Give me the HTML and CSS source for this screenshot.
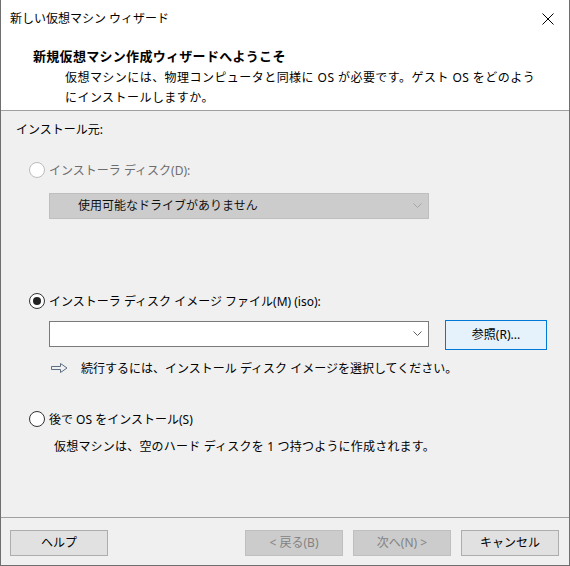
FILE: index.html
```html
<!DOCTYPE html>
<html lang="ja">
<head>
<meta charset="utf-8">
<title>新しい仮想マシン ウィザード</title>
<link rel="stylesheet" href="styles.css">
</head>
<body>
<div class="window">
  <div class="titlebar">
    <span class="title">新しい仮想マシン ウィザード</span>
    <svg class="close" width="12" height="12" viewBox="0 0 12 12"><path d="M0.5 0.5 L11.5 11.5 M11.5 0.5 L0.5 11.5" stroke="#000" stroke-width="1" fill="none"/></svg>
  </div>
  <div class="header">
    <div class="header-title">新規仮想マシン作成ウィザードへようこそ</div>
    <div class="header-desc">仮想マシンには、物理コンピュータと同様に OS が必要です。ゲスト OS をどのよう<br>にインストールしますか。</div>
  </div>
  <div class="content">
    <div class="label">インストール元:</div>

    <div class="radio-row disabled first">
      <span class="radio"></span>
      <span>インストーラ ディスク(D):</span>
    </div>
    <div class="combo combo-disabled">
      <span class="combo-text">使用可能なドライブがありません</span>
      <svg class="chev" width="9" height="6" viewBox="0 0 9 6"><path d="M0.5 0.5 L4.5 4.5 L8.5 0.5" stroke="#a6a6a6" fill="none"/></svg>
    </div>

    <div class="radio-row second">
      <span class="radio checked"></span>
      <span>インストーラ ディスク イメージ ファイル(M) (iso):</span>
    </div>
    <div class="iso-row">
      <div class="combo combo-edit">
        <svg class="chev" width="9" height="6" viewBox="0 0 9 6"><path d="M0.5 0.5 L4.5 4.5 L8.5 0.5" stroke="#606060" fill="none"/></svg>
      </div>
      <div class="btn btn-focus">参照(R)...</div>
    </div>
    <div class="hint-row">
      <svg class="arrow" width="17" height="10" viewBox="0 0 17 10"><path d="M0.5 3.5 H9.5 V0.5 L16 5 L9.5 9.5 V6.5 H0.5 Z" fill="none" stroke="#5d6d82" stroke-width="1"/></svg>
      <span>続行するには、インストール ディスク イメージを選択してください。</span>
    </div>

    <div class="radio-row third">
      <span class="radio"></span>
      <span>後で OS をインストール(S)</span>
    </div>
    <div class="note">仮想マシンは、空のハード ディスクを 1 つ持つように作成されます。</div>
  </div>
  <div class="footer">
    <div class="btn">ヘルプ</div>
    <div class="spacer"></div>
    <div class="btn btn-disabled">&lt; 戻る(B)</div>
    <div class="btn btn-disabled">次へ(N) &gt;</div>
    <div class="btn">キャンセル</div>
  </div>
</div>
</body>
</html>
```

FILE: styles.css
```css
* { box-sizing: border-box; }
html, body { margin: 0; padding: 0; }
body {
  width: 570px;
  height: 566px;
  background: #f0f0f0;
  font-family: "Noto Sans", "Noto Sans CJK JP", sans-serif;
  font-size: 12px;
  color: #000;
}
.window {
  width: 570px;
  height: 566px;
  background: #f0f0f0;
  border-left: 1px solid #6f6f6f;
  border-right: 1px solid #6f6f6f;
  border-bottom: 1px solid #6f6f6f;
  display: flex;
  flex-direction: column;
}
.titlebar {
  height: 37px;
  background: #fff;
  display: flex;
  align-items: center;
  padding-left: 9px;
  padding-right: 15px;
}
.title { flex: 1; line-height: 18px; }
.close { display: block; }
.header {
  background: #fff;
  height: 74px;
  border-bottom: 1px solid #a0a0a0;
  padding-top: 10px;
}
.header-title {
  font-weight: bold;
  font-size: 13px;
  line-height: 18px;
  padding-left: 32px;
  letter-spacing: 0.3px;
}
.header-desc {
  margin-top: 3px;
  padding-left: 64px;
  line-height: 20px;
  white-space: nowrap;
  letter-spacing: 0.45px;
}
.content {
  padding-top: 10px;
  padding-left: 15px;
  display: flex;
  flex-direction: column;
}
.label { line-height: 18px; }
.radio-row {
  display: flex;
  align-items: center;
  height: 20px;
  padding-left: 13px;
  gap: 4px;
  white-space: nowrap;
}
.radio-row.first { margin-top: 21px; }
.radio-row.second { margin-top: 72px; }
.radio-row.third { margin-top: 31px; }
.radio-row.disabled { color: #6d6d6d; }
.radio {
  width: 16px;
  height: 16px;
  border: 1px solid #333;
  border-radius: 50%;
  background: #fff;
  display: flex;
  align-items: center;
  justify-content: center;
}
.disabled .radio { border-color: #bcbcbc; background: #fff; }
.radio.checked::after {
  content: "";
  width: 8px;
  height: 8px;
  border-radius: 50%;
  background: #222;
}
.combo {
  width: 380px;
  height: 26px;
  margin-left: 33px;
  display: flex;
  align-items: center;
}
.combo-disabled {
  margin-top: 13px;
  background: #cccccc;
  border: 1px solid #bfbfbf;
  padding-left: 28px;
}
.combo-text { flex: 1; line-height: 18px; color: #111; }
.chev { display: block; margin-right: 6px; }
.combo-edit {
  background: #fff;
  border: 1px solid #7a7a7a;
  justify-content: flex-end;
  margin-top: 1px;
}
.iso-row {
  display: flex;
  align-items: flex-start;
  margin-top: 9px;
  gap: 16px;
}
.btn {
  width: 98px;
  height: 26px;
  border: 1px solid #adadad;
  background: #e1e1e1;
  display: flex;
  align-items: center;
  justify-content: center;
  white-space: nowrap;
  line-height: 18px;
}
.btn-focus {
  width: 102px;
  height: 30px;
  border-color: #0078d7;
  background: #e5f1fb;
}
.btn-disabled {
  background: #cccccc;
  border-color: #bfbfbf;
  color: #838383;
}
.hint-row {
  display: flex;
  align-items: center;
  height: 20px;
  margin-top: 8px;
  padding-left: 35px;
  gap: 13px;
  white-space: nowrap;
}
.arrow { display: block; }
.note {
  margin-top: 8px;
  padding-left: 38px;
  line-height: 20px;
  white-space: nowrap;
  letter-spacing: 0.2px;
}
.footer {
  margin-top: auto;
  border-top: 1px solid #a0a0a0;
  height: 48px;
  padding: 12px 10px 0 9px;
  display: flex;
  align-items: flex-start;
  gap: 10px;
}
.spacer { flex: 1; }
```
